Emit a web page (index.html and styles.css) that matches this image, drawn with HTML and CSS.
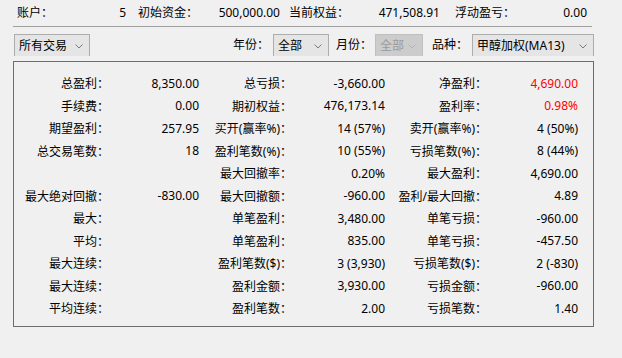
FILE: index.html
```html
<!DOCTYPE html>
<html lang="zh-CN">
<head>
    <meta charset="UTF-8">
    <title>交易统计</title>
    <link rel="stylesheet" href="styles.css">
</head>
<body>
    <div class="account-bar">
        <div class="stat"><span>账户：</span><span>5</span></div>
        <div class="stat stat-capital"><span>初始资金：</span><span>500,000.00</span></div>
        <div class="stat stat-equity"><span>当前权益：</span><span>471,508.91</span></div>
        <div class="stat stat-float"><span>浮动盈亏：</span><span>0.00</span></div>
    </div>

    <div class="filters">
        <div class="combo combo-trades">所有交易<svg class="chevron" width="8" height="5" viewBox="0 0 8 5"><polyline points="0.5,0.5 4,4 7.5,0.5"/></svg></div>
        <div class="filter-group">
            <span class="filter-label">年份：</span>
            <div class="combo combo-year">全部<svg class="chevron" width="8" height="5" viewBox="0 0 8 5"><polyline points="0.5,0.5 4,4 7.5,0.5"/></svg></div>
            <span class="filter-label gap-a">月份：</span>
            <div class="combo combo-month disabled">全部<svg class="chevron" width="8" height="5" viewBox="0 0 8 5"><polyline points="0.5,0.5 4,4 7.5,0.5"/></svg></div>
            <span class="filter-label gap-b">品种：</span>
            <div class="combo combo-symbol">甲醇加权(MA13)<svg class="chevron" width="8" height="5" viewBox="0 0 8 5"><polyline points="0.5,0.5 4,4 7.5,0.5"/></svg></div>
        </div>
    </div>

    <div class="report">
        <span>总盈利：</span><span>8,350.00</span>
        <span>总亏损：</span><span>-3,660.00</span>
        <span>净盈利：</span><span class="red">4,690.00</span>

        <span>手续费：</span><span>0.00</span>
        <span>期初权益：</span><span>476,173.14</span>
        <span>盈利率：</span><span class="red">0.98%</span>

        <span>期望盈利：</span><span>257.95</span>
        <span>买开(赢率%)：</span><span>14 (57%)</span>
        <span>卖开(赢率%)：</span><span>4 (50%)</span>

        <span>总交易笔数：</span><span>18</span>
        <span>盈利笔数(%)：</span><span>10 (55%)</span>
        <span>亏损笔数(%)：</span><span>8 (44%)</span>

        <span></span><span></span>
        <span>最大回撤率：</span><span>0.20%</span>
        <span>最大盈利：</span><span>4,690.00</span>

        <span>最大绝对回撤：</span><span>-830.00</span>
        <span>最大回撤额：</span><span>-960.00</span>
        <span>盈利/最大回撤：</span><span>4.89</span>

        <span>最大：</span><span></span>
        <span>单笔盈利：</span><span>3,480.00</span>
        <span>单笔亏损：</span><span>-960.00</span>

        <span>平均：</span><span></span>
        <span>单笔盈利：</span><span>835.00</span>
        <span>单笔亏损：</span><span>-457.50</span>

        <span>最大连续：</span><span></span>
        <span>盈利笔数($)：</span><span>3 (3,930)</span>
        <span>亏损笔数($)：</span><span>2 (-830)</span>

        <span>最大连续：</span><span></span>
        <span>盈利金额：</span><span>3,930.00</span>
        <span>亏损金额：</span><span>-960.00</span>

        <span>平均连续：</span><span></span>
        <span>盈利笔数：</span><span>2.00</span>
        <span>亏损笔数：</span><span>1.40</span>
    </div>
</body>
</html>
```

FILE: styles.css
```css
* {
    margin: 0;
    padding: 0;
    box-sizing: border-box;
}

body {
    background: #f0f0f0;
    color: #000;
    font-family: "Noto Sans", "Noto Sans CJK SC", sans-serif;
    font-size: 12px;
}

/* top line with account numbers */
.account-bar {
    display: flex;
    height: 27px;
    margin: 0 30px 0 13px;
    padding-left: 4px;
    line-height: 25px;
    border-bottom: 1px solid #a0a0a0;
}

.stat {
    display: flex;
    justify-content: space-between;
    width: 109px;
}

.stat-capital {
    width: 142px;
    margin-left: 12px;
}

.stat-equity {
    width: 151px;
    margin-left: 9px;
}

.stat-float {
    width: 132px;
    margin-left: 15px;
}

/* filter row */
.filters {
    display: flex;
    justify-content: space-between;
    align-items: flex-start;
    width: 580px;
    height: 22px;
    margin: 7px 0 0 14px;
}

.filter-group {
    display: flex;
    align-items: flex-start;
}

.filter-label {
    width: 40px;
    line-height: 22px;
}

.filter-label.gap-a {
    width: 39px;
    margin-left: 7px;
}

.filter-label.gap-b {
    margin-left: 9px;
}

.combo {
    position: relative;
    height: 22px;
    padding-left: 4px;
    line-height: 22px;
    background: #e5e5e5;
    border: 1px solid #adadad;
    border-bottom: none;
}

.chevron {
    position: absolute;
    right: 6px;
    top: 9px;
    fill: none;
    stroke: #7a7a7a;
    stroke-width: 1;
}

.combo-trades { width: 76px; }
.combo-year { width: 56px; }
.combo-month { width: 48px; }
.combo-symbol { width: 122px; }

.combo.disabled {
    background: #cccccc;
    border-color: #bfbfbf;
    color: #9a9a9a;
}

.combo.disabled .chevron {
    stroke: #b4b4b4;
}

/* statistics panel */
.report {
    display: grid;
    grid-template-columns: 95px 90px 93px 93px 102px 91px;
    grid-auto-rows: 22.5px;
    align-items: center;
    width: 581px;
    height: 266px;
    margin: 5px 0 0 13px;
    padding-top: 10px;
    border: 1px solid #6d6d6d;
    text-align: right;
}

.red {
    color: #ff0000;
}
```
